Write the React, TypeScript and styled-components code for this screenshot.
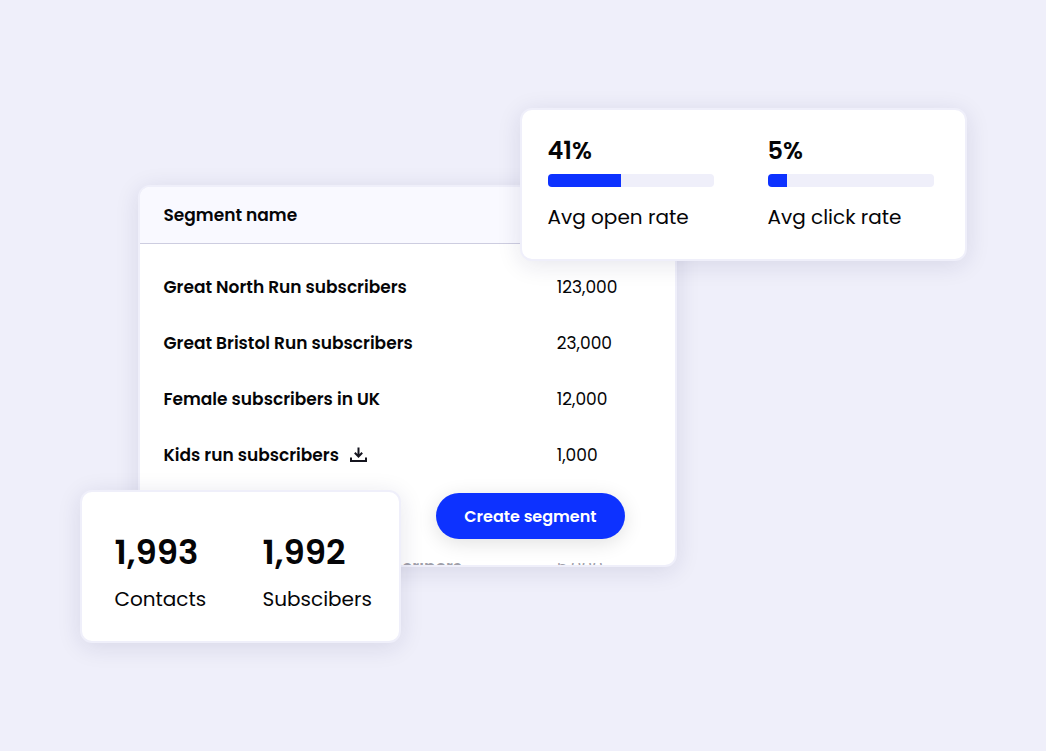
import React from "react";
import styled, { createGlobalStyle } from "styled-components";

const GlobalStyle = createGlobalStyle`
  *, *::before, *::after { box-sizing: border-box; }
  body {
    margin: 0;
    background: #efeffa;
    color: #050507;
    font-family: Poppins, Inter, "Liberation Sans", sans-serif;
  }
`;

const Page = styled.main`
  display: flex;
  align-items: center;
  justify-content: center;
  min-height: 100vh;
`;

const Stage = styled.div`
  position: relative;
  width: 100%;
  max-width: 887px;
  padding: 77px 290px 76px 58px;
`;

const Card = styled.section`
  background: #fff;
  border: 2px solid #efeffa;
  border-radius: 12px;
  box-shadow: 0 4px 24px rgba(30, 30, 80, 0.11);
`;

const SegmentCard = styled(Card)`
  overflow: hidden;
`;

const Table = styled.table`
  width: 100%;
  border-collapse: separate;
  border-spacing: 0;
  table-layout: fixed;
  font-size: 17px;
  line-height: 24px;
  text-align: left;

  tbody::before {
    content: "";
    display: block;
    height: 15px;
  }
`;

const HeadCell = styled.th<{ $wide?: boolean }>`
  width: ${(p) => (p.$wide ? "78%" : "22%")};
  height: 57px;
  padding: 0 0 0 24px;
  background: #f9f9ff;
  border-bottom: 1px solid #cdcde0;
  font-weight: 600;
`;

const NameCell = styled.th`
  height: 56px;
  padding: 0 0 0 24px;
  font-weight: 600;
`;

const CountCell = styled.td`
  padding: 0;
`;

const NameLine = styled.span`
  display: flex;
  align-items: center;
  gap: 11px;
`;

const IconButton = styled.button`
  display: flex;
  padding: 0;
  border: 0;
  background: none;
  color: #15151f;
  cursor: pointer;
`;

const Actions = styled.div`
  display: flex;
  justify-content: flex-end;
  padding: 10px 50px 24px 24px;
`;

const CreateButton = styled.button`
  height: 46px;
  padding: 0 28px;
  border: 0;
  border-radius: 23px;
  background: #0d32ff;
  box-shadow: 0 4px 20px rgba(0, 0, 0, 0.12);
  color: #fff;
  font-family: inherit;
  font-size: 16px;
  font-weight: 600;
  cursor: pointer;
`;

const NextRow = styled.div`
  display: grid;
  grid-template-columns: 78% 22%;
  height: 2px;
  overflow: hidden;
  color: #a0a0aa;
  font-size: 17px;
  line-height: 8px;

  strong {
    padding-left: 24px;
    font-weight: 600;
  }
`;

const FloatingCard = styled(Card)`
  position: absolute;
  display: flex;
  height: 153px;
`;

const RatesCard = styled(FloatingCard)`
  top: 0;
  right: 0;
  gap: 54px;
  padding: 26px 31px 26px 26px;
`;

const TotalsCard = styled(FloatingCard)`
  bottom: 0;
  left: 0;
  width: 321px;
  padding: 39px 0 0 33px;
`;

const Rate = styled.div`
  width: 166px;
`;

const RateValue = styled.div`
  font-size: 24px;
  font-weight: 600;
  line-height: 30px;
`;

const Track = styled.div`
  height: 13px;
  margin: 8px 0 16px;
  overflow: hidden;
  border-radius: 4px;
  background: #efeffa;
`;

const Fill = styled.div`
  height: 100%;
  background: #0d32ff;
`;

const Label = styled.div`
  font-size: 20px;
  line-height: 28px;
  white-space: nowrap;
`;

const Total = styled.div`
  flex: none;
  width: 148px;
`;

const TotalValue = styled.div`
  margin-bottom: 12px;
  font-size: 34px;
  font-weight: 600;
  line-height: 42px;
`;

const DownloadIcon = () => (
  <svg width="17" height="16" viewBox="0 0 17 16" fill="none" stroke="currentColor" strokeWidth="2" aria-hidden="true">
    <path d="M8.5 0.5V9.5M4.8 5.8L8.5 9.5L12.2 5.8" />
    <path d="M1 10.5V14H16V10.5" />
  </svg>
);

const segments = [
  { name: "Great North Run subscribers", count: "123,000" },
  { name: "Great Bristol Run subscribers", count: "23,000" },
  { name: "Female subscribers in UK", count: "12,000" },
  { name: "Kids run subscribers", count: "1,000", download: true },
];

const rates = [
  { value: "41%", fill: 44, label: "Avg open rate" },
  { value: "5%", fill: 12, label: "Avg click rate" },
];

const totals = [
  { value: "1,993", label: "Contacts" },
  { value: "1,992", label: "Subscibers" },
];

export default function App() {
  return (
    <>
      <GlobalStyle />
      <Page>
        <Stage>
          <SegmentCard>
            <Table>
              <thead>
                <tr>
                  <HeadCell scope="col" $wide>Segment name</HeadCell>
                  <HeadCell as="td" />
                </tr>
              </thead>
              <tbody>
                {segments.map((s) => (
                  <tr key={s.name}>
                    <NameCell scope="row">
                      <NameLine>
                        {s.name}
                        {s.download && (
                          <IconButton type="button" aria-label="Download">
                            <DownloadIcon />
                          </IconButton>
                        )}
                      </NameLine>
                    </NameCell>
                    <CountCell>{s.count}</CountCell>
                  </tr>
                ))}
              </tbody>
            </Table>
            <Actions>
              <CreateButton type="button">Create segment</CreateButton>
            </Actions>
            <NextRow aria-hidden="true">
              <strong>Great Manchester Run subscribers</strong>
              <span>5,000</span>
            </NextRow>
          </SegmentCard>

          <RatesCard>
            {rates.map((r) => (
              <Rate key={r.label}>
                <RateValue>{r.value}</RateValue>
                <Track>
                  <Fill style={{ width: `${r.fill}%` }} />
                </Track>
                <Label>{r.label}</Label>
              </Rate>
            ))}
          </RatesCard>

          <TotalsCard>
            {totals.map((t) => (
              <Total key={t.label}>
                <TotalValue>{t.value}</TotalValue>
                <Label>{t.label}</Label>
              </Total>
            ))}
          </TotalsCard>
        </Stage>
      </Page>
    </>
  );
}
